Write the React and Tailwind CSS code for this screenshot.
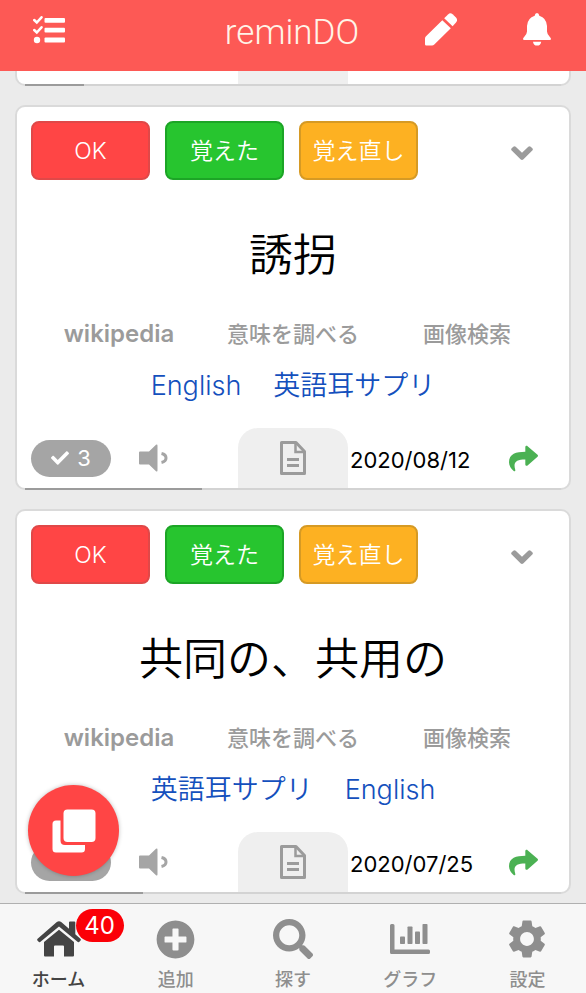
import { FaCheck, FaPlusCircle, FaSearch, FaShare } from "react-icons/fa";
import { MdSettings } from "react-icons/md";

const cards = [
  {
    id: 1,
    word: "誘拐",
    count: 3,
    date: "2020/08/12",
    progress: 33,
    tags: ["English", "英語耳サプリ"],
  },
  {
    id: 2,
    word: "共同の、共用の",
    count: 2,
    date: "2020/07/25",
    progress: 22,
    tags: ["英語耳サプリ", "English"],
  },
];

const lookups = ["wikipedia", "意味を調べる", "画像検索"];

function TasksIcon() {
  return (
    <svg viewBox="0 0 32 28" className="h-7 w-8" fill="currentColor">
      <rect x="11.500" y="2" width="20.500" height="4.800" rx="1" />
      <rect x="11.500" y="11.800" width="20.500" height="4.800" rx="1" />
      <rect x="11.500" y="21.600" width="20.500" height="4.800" rx="1" />
      <circle cx="4" cy="24" r="3.200" />
      <path
        d="M1.200 4l2.600 2.500L8.500 1.300M1.200 14l2.600 2.500 4.700-5.200"
        fill="none"
        stroke="currentColor"
        strokeWidth="2.500"
        strokeLinecap="round"
      />
    </svg>
  );
}

function PencilIcon() {
  return (
    <svg viewBox="0 0 32 33" className="h-[33px] w-8" fill="currentColor">
      <path d="M17.300 7.200L25.800 15.300 9.300 31.500Q8.300 32.500 7 32.500H1.200Q0 32.500 0 31.300V25.500Q0 24.300 1 23.300z" />
      <path d="M19.200 5.300L23 1.500Q25.300-.800 27.600 1.300L31 4.600Q33.100 6.800 31 9.400L27.600 13.300z" />
    </svg>
  );
}

function BellIcon() {
  return (
    <svg viewBox="0 0 28 33" className="h-[33px] w-7" fill="currentColor">
      <path d="M14 0q2 0 2.300 2.800Q23.500 5 24 13v5.500q.2 3 2.700 5.300 1.300 1.200 1.300 2.200 0 1-1.300 1H1.300Q0 27 0 26q0-1 1.300-2.200Q3.800 21.500 4 18.500V13q.5-8 7.700-10.200Q12 0 14 0z" />
      <path d="M10 28.700h8.200q-.6 3.900-4.100 3.900T10 28.700z" />
    </svg>
  );
}

function HomeIcon() {
  return (
    <svg viewBox="0 0 44 36" className="h-9 w-11" fill="currentColor">
      <path d="M19.800 1.100q2.200-1.600 4.400 0L32 7.800V1.500q0-1 1-1h4.300q1 0 1 1v11.800l5.100 4.500q.8.800.2 1.600l-1.200 1.400q-.8.800-1.600.1L22 5.500 3.200 20.900q-.8.700-1.600-.1L.4 19.400q-.6-.8.200-1.600z" />
      <path d="M22 8.700L37 21v13.500q0 1-1 1h-9V25.500q0-1-1-1h-8q-1 0-1 1v10H8q-1 0-1-1V21z" />
    </svg>
  );
}

function ChevronIcon() {
  return (
    <svg viewBox="0 0 22 14" className="h-3.5 w-[22px]" fill="currentColor">
      <path d="M2.300.700q1.200-1 2.400 0L11 6.700l6.300-6q1.200-1 2.400 0l1.600 1.600q1.100 1.200 0 2.300l-8.800 8.700q-1.500 1.200-3 0L.7 4.600q-1.100-1.100 0-2.300z" />
    </svg>
  );
}

function SpeakerIcon() {
  return (
    <svg viewBox="0 0 29 28" className="h-7 w-[29px]" fill="currentColor">
      <path d="M1 7.500h9l7-6.700q1.500-1 1.500 1v24.400q0 2-1.500 1L10 20.500H1q-1 0-1-1v-11q0-1 1-1z" />
      <path d="M22.500 9.500q4.500 1 4.500 4.500t-4.500 4.500" fill="none" stroke="currentColor" strokeWidth="3" />
    </svg>
  );
}

function DocIcon() {
  return (
    <svg viewBox="0 0 26 34" className="h-[34px] w-[26px]" fill="none" stroke="currentColor" strokeWidth="3">
      <path d="M1.500 1.500h14.500l8.500 9V32.500h-23z" strokeLinejoin="round" />
      <path d="M15.500 2v9H24" strokeWidth="2.500" />
      <path d="M7 18.500h12M7 24.500h12" strokeWidth="3" />
    </svg>
  );
}

function StackIcon() {
  return (
    <svg viewBox="0 0 44 44" className="size-11" fill="currentColor">
      <rect x="11.500" y="0.500" width="32" height="32.500" rx="4" />
      <path d="M8.500 11.500v20q0 4.500 4.500 4.500h20v4q0 3.500-3.500 3.500H4Q.5 43.500.5 40V15q0-3.500 3.500-3.500z" />
    </svg>
  );
}

function ChartIcon() {
  return (
    <svg viewBox="0 0 40 30" className="h-[30px] w-10" fill="currentColor">
      <path d="M1.500 0h1.500q1.500 0 1.500 1.500V25.500h34q1.500 0 1.500 1.500v1.500q0 1.500-1.500 1.500H1.500Q0 30 0 28.500v-27Q0 0 1.500 0z" />
      <rect x="10" y="12.500" width="5" height="7.500" rx="0.800" />
      <rect x="17.500" y="2.500" width="5" height="17.500" rx="0.800" />
      <rect x="25" y="7.500" width="5" height="12.500" rx="0.800" />
      <rect x="32.500" y="0" width="5" height="20" rx="0.800" />
    </svg>
  );
}

function CardButton({ className, children }) {
  return (
    <button
      type="button"
      className={`h-[59px] flex-1 rounded-lg border-2 pt-0.5 text-[23px] font-[350] whitespace-nowrap text-white ${className}`}
    >
      {children}
    </button>
  );
}

function ProgressLine({ value }) {
  return (
    <div className="absolute inset-x-2 -bottom-0.5 h-0.5 bg-[#d3d3d3]">
      <div className="h-full bg-[#9b9b9b]" style={{ width: `${value}%` }} />
    </div>
  );
}

function WordCard({ card }) {
  return (
    <article className="relative rounded-[10px] border-2 border-[#dadada] bg-white">
      <div className="flex gap-[15px] px-3.5 pt-3.5">
        <CardButton className="border-[#e04848] bg-[#ff4545]">OK</CardButton>
        <CardButton className="border-[#1ca526] bg-[#27c52f]">覚えた</CardButton>
        <CardButton className="border-[#d69a24] bg-[#fdb122]">覚え直し</CardButton>
        <button
          type="button"
          aria-label="メニュー"
          className="flex w-[122px] items-center justify-end pt-1 pr-[22px] text-[#9b9b9b]"
        >
          <ChevronIcon />
        </button>
      </div>

      <h2 className="mt-[42px] text-center text-[44px] leading-[66px] font-[350] text-black">{card.word}</h2>

      <div className="mt-[30px] grid grid-cols-3 px-[15px] text-center text-[22px] leading-8 font-medium text-[#9b9b9b]">
        {lookups.map((label) => (
          <a key={label} href="#" className="first:text-2xl/8 first:font-semibold">
            {label}
          </a>
        ))}
      </div>

      <div className="mt-4 flex justify-center gap-8 text-[27px] leading-10 font-[350] text-[#1450bd]">
        {card.tags.map((tag) => (
          <a key={tag} href="#">
            {tag}
          </a>
        ))}
      </div>

      <div className="mt-[22px] grid h-[60px] grid-cols-[1fr_110px_1fr]">
        <div className="flex items-center gap-7 pl-3.5 text-[#a5a5a5]">
          <span className="flex h-[37px] w-20 items-center justify-center gap-2 rounded-full bg-[#a5a5a5] text-[22px] text-white">
            <FaCheck className="size-[18px]" />
            {card.count}
          </span>
          <button type="button" aria-label="再生">
            <SpeakerIcon />
          </button>
        </div>
        <button
          type="button"
          aria-label="メモ"
          className="flex items-center justify-center rounded-t-[20px] bg-[#efefef] text-[#9b9b9b]"
        >
          <DocIcon />
        </button>
        <div className="flex items-center justify-between pr-[31px] pl-0.5">
          <time className="pt-1 text-[22px] text-black">{card.date}</time>
          <button type="button" aria-label="共有" className="text-[#4bb153]">
            <FaShare className="size-[29px]" />
          </button>
        </div>
      </div>
      <ProgressLine value={card.progress} />
    </article>
  );
}

function Tab({ label, active, children }) {
  return (
    <a
      href="#"
      className={`flex flex-1 flex-col items-center gap-1.5 pt-3 text-lg leading-6 font-medium ${
        active ? "text-[#444444]" : "text-[#8e8e8e]"
      }`}
    >
      <span className="relative flex h-[46px] items-center">{children}</span>
      {label}
    </a>
  );
}

export default function App() {
  return (
    <div className="flex min-h-screen flex-col bg-[#ebebeb] font-['Inter','Noto_Sans_CJK_JP',sans-serif]">
      <header className="sticky top-0 z-10 grid h-[71px] grid-cols-3 items-center bg-[#fd5955] pr-[35px] pb-3 pl-[33px] text-white">
        <button type="button" aria-label="一覧" className="justify-self-start">
          <TasksIcon />
        </button>
        <h1 className="pt-1.5 text-center font-['Roboto',sans-serif] text-[35px] leading-none font-light text-[#fff4e8]">
          reminDO
        </h1>
        <div className="flex items-center justify-end gap-[66px]">
          <button type="button" aria-label="編集">
            <PencilIcon />
          </button>
          <button type="button" aria-label="通知">
            <BellIcon />
          </button>
        </div>
      </header>

      <main className="flex flex-1 flex-col gap-[19px] px-[15px] pb-[9px]">
        <div className="relative flex h-[15px] justify-center rounded-b-[10px] border-2 border-t-0 border-[#dadada] bg-white">
          <div className="w-[110px] bg-[#efefef]" />
          <ProgressLine value={11} />
        </div>
        {cards.map((card) => (
          <WordCard key={card.id} card={card} />
        ))}
      </main>

      <nav className="sticky bottom-0 flex h-[90px] border-t border-[#b0b0b0] bg-[#f7f7f7]">
        <button
          type="button"
          aria-label="カード"
          className="absolute bottom-[117px] left-7 flex size-[91px] items-center justify-center rounded-full bg-[#ff4545] text-white shadow-[0_0_4px_rgba(0,0,0,0.25)]"
        >
          <StackIcon />
        </button>
        <Tab label="ホーム" active>
          <HomeIcon />
          <span className="absolute -top-[7px] left-[39px] flex h-[33px] w-12 items-center justify-center rounded-full bg-[#fb0007] text-2xl font-normal text-white">
            40
          </span>
        </Tab>
        <Tab label="追加">
          <FaPlusCircle className="size-[39px]" />
        </Tab>
        <Tab label="探す">
          <FaSearch className="size-10" />
        </Tab>
        <Tab label="グラフ">
          <ChartIcon />
        </Tab>
        <Tab label="設定">
          <MdSettings className="size-[46px]" />
        </Tab>
      </nav>
    </div>
  );
}
